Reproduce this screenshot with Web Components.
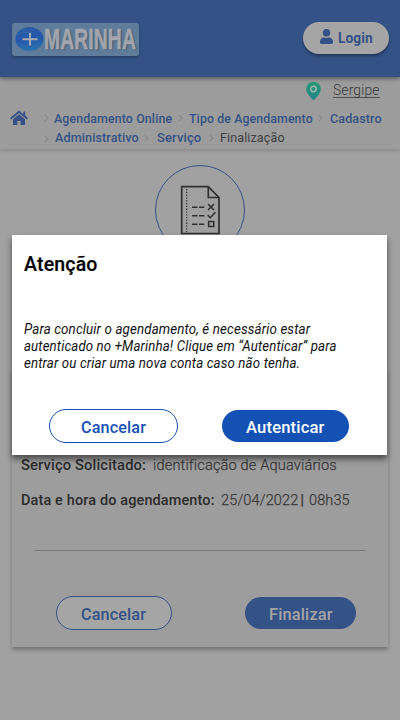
<!DOCTYPE html>
<html lang="pt-BR"><head><meta charset="utf-8"><title>+Marinha</title>
<style>html,body{margin:0;width:400px;height:720px;overflow:hidden;background:#a1a1a1;font-family:Roboto,"Liberation Sans",sans-serif}</style></head>
<body><marinha-app></marinha-app>
<script>
function define(name, html, after) {
  const t = document.createElement('template');
  t.innerHTML = html;
  customElements.define(name, class extends HTMLElement {
    connectedCallback() {
      if (this.shadowRoot) return;
      this.attachShadow({mode: 'open'}).appendChild(t.content.cloneNode(true));
      if (after) after(this, this.shadowRoot);
    }
  });
}
define('fit-text', `<style>:host{display:block;flex:none;white-space:nowrap}span{display:inline-block;transform-origin:0 50%;white-space:pre;letter-spacing:.01em}</style><span><slot></slot></span>`, (h, r) => {
  const w = +h.getAttribute('w'), s = r.querySelector('span');
  h.style.width = w + 'px';
  s.style.transform = 'scaleX(' + w / s.offsetWidth + ')';
});
define('pill-button', `<style>:host{display:flex;box-sizing:border-box;flex:none;align-items:center;justify-content:center;height:34px;border:1.3px solid var(--c);border-radius:17px;color:var(--c);background:var(--b);font-size:17px;font-weight:500;line-height:34px;padding-top:1px}
:host([solid]){height:32px;border:0;border-radius:16px;background:var(--c);color:var(--b)}</style><slot></slot>`);
define('crumb-arrow', `<style>:host{display:block;flex:none;width:5px;height:8px}svg{display:block}</style><svg width="5" height="8" viewBox="0 0 5 8"><path d="M.8.8 4 4 .8 7.2" fill="none" stroke="#888" stroke-width="1.2"/></svg>`);
define('brand-logo', `<style>:host{display:flex;box-sizing:border-box;width:127px;height:33px;margin-top:22.5px;background:#5f7d9a;border-radius:3px;box-shadow:0 2px 3px #0003;padding-left:3px}
svg{flex:none;margin-top:3px}fit-text{font:bold 29px/33px "Liberation Sans",sans-serif;height:33px;color:#a3a5ad;text-shadow:2px 1px 2px #0004;-webkit-text-stroke:.6px #a3a5ad}</style>
<svg width="29" height="26" viewBox="0 0 29 26"><defs><linearGradient id="g" x2=".2" y2="1"><stop stop-color="#2c60a5"/><stop offset=".55" stop-color="#2556aa"/><stop offset="1" stop-color="#2a70ad"/></linearGradient></defs><ellipse cx="14.5" cy="13" rx="14" ry="12" fill="url(#g)"/><path d="M3 8q7-3 14-1M2 17q7 4 13 2t10-1" stroke="#3068ae" fill="none"/><path d="M7.5 13.3h15M15 7v12.5" stroke="#a9acb2" stroke-width="1.9"/></svg><fit-text w="92">MARINHA</fit-text>`);
define('login-button', `<style>:host{display:flex;box-sizing:border-box;width:86px;height:32px;margin-top:22px;border-radius:16px;background:#a5a5a5;box-shadow:0 2px 3px #0005;color:#345285;padding-left:17px;font-weight:700;font-size:14px;line-height:32px}svg{margin:7px 5px 0 0}</style>
<svg width="13" height="15" viewBox="0 0 448 512" preserveAspectRatio="none"><path fill="currentColor" d="M224 256a128 128 0 1 0 0-256 128 128 0 1 0 0 256zm90 32h-17a174 174 0 0 1-146 0h-17C60 288 0 348 0 422v42c0 27 21 48 48 48h352c27 0 48-21 48-48v-42c0-74-60-134-134-134z"/></svg><fit-text w="35">Login</fit-text>`);
define('app-header', `<style>:host{display:flex;justify-content:space-between;box-sizing:border-box;height:77px;padding:0 11px 0 12px;background:#345285;box-shadow:0 2px 4px #0006;position:relative}</style><brand-logo></brand-logo><login-button></login-button>`);
define('crumb-nav', `<style>:host{display:block;box-sizing:border-box;height:71.5px;background:#9c9c9c;box-shadow:0 2px 3px #0002;font-size:13px;font-weight:500;color:#345285;padding-top:4px}
div{display:flex}.loc{height:20px;padding-left:306px;color:#454545;font-size:14px;line-height:19px}.loc fit-text{margin-left:11px;height:16.5px;border-bottom:1px solid #515151;box-sizing:border-box;line-height:18px;font-weight:300;color:#383838}
.row{line-height:18px;height:18px}.a{margin-top:9px;padding-left:10px}.b{padding-left:44px;margin-top:1px}crumb-arrow{margin-top:4px}.home{margin-right:16px}</style>
<div class="loc"><svg width="16" height="20" viewBox="0 0 16 20"><defs><linearGradient id="p" x2="0" y2="1"><stop stop-color="#2b9975"/><stop offset="1" stop-color="#22838b"/></linearGradient></defs><path d="M7.5.7A7.3 7.3 0 0 0 .2 8c0 4 4 8 7.3 11.5C10.800 16 14.800 12 14.800 8A7.300 7.300 0 0 0 7.500.7Z" fill="url(#p)"/><circle cx="7.500" cy="8" r="2.700" fill="none" stroke="#a0b7ad" stroke-width="1.400"/></svg><fit-text w="46.500">Sergipe</fit-text></div>
<div class="row a"><svg class="home" width="18" height="16" viewBox="0 0 18 16"><path d="M.6 8.700 9 1.700l8.400 7M14.300 1.500v4.500" fill="none" stroke="#345285" stroke-width="1.900"/><path d="M9 4.300 3 9.300v5.700h4.400v-4h3.200v4H15V9.300Z" fill="#345285"/></svg><crumb-arrow></crumb-arrow><fit-text w="118" style="margin-left:5px">Agendamento Online</fit-text><crumb-arrow style="margin-left:6px"></crumb-arrow><fit-text w="124" style="margin-left:6px">Tipo de Agendamento</fit-text><crumb-arrow style="margin-left:5px"></crumb-arrow><fit-text w="52" style="margin-left:7px">Cadastro</fit-text></div>
<div class="row b"><crumb-arrow style="margin-top:6px"></crumb-arrow><fit-text w="84" style="margin-left:6px">Administrativo</fit-text><crumb-arrow style="margin-left:5px;margin-top:5px"></crumb-arrow><fit-text w="44" style="margin-left:8px">Serviço</fit-text><crumb-arrow style="margin-left:8px;margin-top:5px"></crumb-arrow><fit-text w="64.500" style="margin-left:6px;color:#3f3f3f;font-weight:400">Finalização</fit-text></div>`);
define('step-icon', `<style>:host{display:block;width:90px;height:90px;margin:16.500px auto 0}svg{display:block}</style>
<svg width="90" height="90" viewBox="0 0 90 90" fill="none" stroke="#303030"><circle cx="45" cy="45" r="44.500" stroke="#345285"/><path d="M26.700 21.700h26.600L64 32.500v36H26.700Z" fill="#a0a0a0" stroke-width="1.700"/><path d="M53.300 21.700v10.800H64" stroke-width="1.700"/><path d="M31.700 24v43" stroke-width="1.200" stroke-dasharray="1.300 1.500"/><path d="M37 42.200h5.500M44 42.200h5.300M37 50.700h5.500M44 50.700h5.300M37 59.200h5.500M44 59.200h5.300" stroke-width="1.500"/><path d="m53 39 6 6m0-6-6 6M52.700 50l2.500 2.700 5.300-5.500M53.700 56.500h5v5h-5Z" stroke-width="1.600"/></svg>`);
define('summary-card', `<style>:host{display:block;box-sizing:border-box;width:376px;height:277px;margin:115px 12px 0;padding:84px 0 0;background:#9d9d9d;box-shadow:0 3px 4px #0004;font-size:15px;line-height:22px;color:#2c2c2c}
.r{display:flex;height:22px;margin:0 0 13px 9px}.l{font-weight:500}.v{color:#383838;font-weight:300;-webkit-text-stroke:.25px #383838}hr{border:0;height:1px;background:#7c7c7c;margin:0 23px;margin-top:39px}.buttons{display:flex;align-items:center;justify-content:space-between;padding:0 32px 0 44px;margin-top:45px;--c:#345285;--b:#a5a5a5}</style>
<div class="r"><fit-text class="l" w="125.500">Serviço Solicitado:</fit-text><fit-text class="v" w="184" style="margin-left:6px">identificação de Aquaviários</fit-text></div>
<div class="r"><fit-text class="l" w="193.500">Data e hora do agendamento:</fit-text><fit-text class="v" w="77.500" style="margin-left:6px">25/04/2022</fit-text><fit-text class="v" w="4" style="margin-left:2px">|</fit-text><fit-text class="v" w="40.500" style="margin-left:4.500px">08h35</fit-text></div><hr>
<div class="buttons"><pill-button style="width:116px"><fit-text w="65.500">Cancelar</fit-text></pill-button><pill-button solid style="width:111px"><fit-text w="63.500">Finalizar</fit-text></pill-button></div>`);
define('auth-dialog', `<style>:host{display:block;position:absolute;left:12px;top:235px;width:375px;height:220px;box-sizing:border-box;background:#fff;box-shadow:0 4px 6px #0008;color:#111;padding:16px 12px 0}
h1{margin:0;font-size:20px;line-height:26px;font-weight:500;color:#000;-webkit-text-stroke:.2px #000}.copy{margin-top:44px;font-size:14px;line-height:17px;font-style:italic;height:51px}.buttons{display:flex;align-items:center;justify-content:space-between;margin-top:37px;padding:0 26px 0 25px;--c:#1351b4;--b:#fff}</style>
<h1><fit-text w="74">Atenção</fit-text></h1><div class="copy"><fit-text w="286.500">Para concluir o agendamento, é necessário estar</fit-text><fit-text w="313">autenticado no +Marinha! Clique em “Autenticar” para</fit-text><fit-text w="276">entrar ou criar uma nova conta caso não tenha.</fit-text></div>
<div class="buttons"><pill-button style="width:129px"><fit-text w="65.500">Cancelar</fit-text></pill-button><pill-button solid style="width:127px"><fit-text w="79">Autenticar</fit-text></pill-button></div>`);
define('marinha-app', `<style>:host{display:block;position:relative;width:400px;height:720px;overflow:hidden}</style><app-header></app-header><crumb-nav></crumb-nav><step-icon></step-icon><summary-card></summary-card><auth-dialog></auth-dialog>`);
</script></body></html>
